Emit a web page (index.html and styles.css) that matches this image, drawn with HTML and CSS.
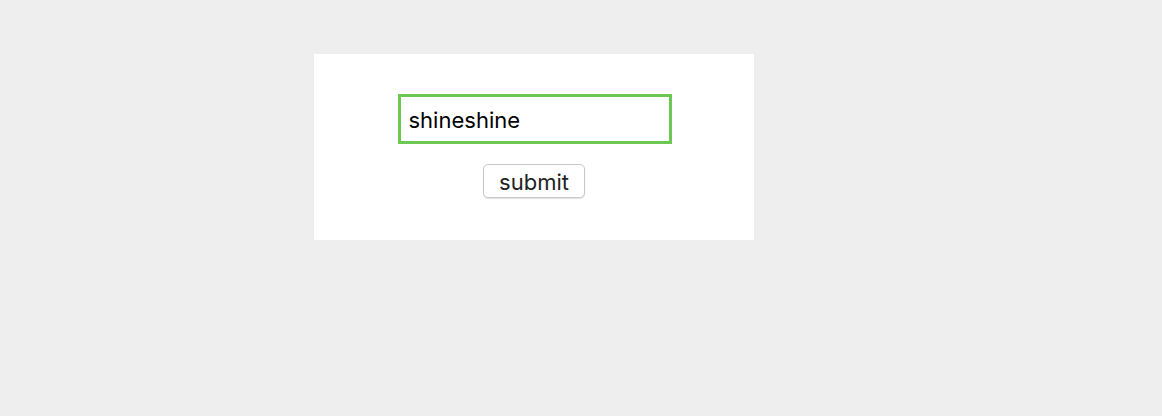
FILE: index.html
```html
<!DOCTYPE html>
<html>
<head>
<meta charset="utf-8">
<link rel="stylesheet" href="styles.css">
</head>
<body>
<div class="page">
  <form class="card">
    <input class="field" type="text" value="shineshine">
    <button class="btn" type="button">submit</button>
  </form>
</div>
</body>
</html>
```
FILE: styles.css
```css
html, body {
  margin: 0;
  padding: 0;
  background: #eeeeee;
  height: 100%;
}
.page {
  padding: 54px 0 0 314px;
}
.card {
  width: 440px;
  height: 186px;
  box-sizing: border-box;
  background: #ffffff;
  padding-top: 40px;
  display: flex;
  flex-direction: column;
  align-items: center;
  gap: 20px;
  margin: 0;
}
.field {
  width: 274px;
  height: 50px;
  box-sizing: border-box;
  border: 3px solid #6cc753;
  outline: none;
  padding: 2px 0 0 8px;
  margin: 0 0 0 1px;
  font-family: "Inter", "Liberation Sans", sans-serif;
  font-size: 22px;
  color: #000;
  background: #fff;
}
.btn {
  width: 102px;
  height: 34px;
  box-sizing: border-box;
  border: 1px solid #c9c9c9;
  border-radius: 5px;
  background: #fff;
  box-shadow: 0 1px 1px rgba(0,0,0,0.12);
  font-family: "Inter", "Liberation Sans", sans-serif;
  font-size: 22px;
  color: #222;
  padding: 2px 0 0 0;
  line-height: 1;
}
```
